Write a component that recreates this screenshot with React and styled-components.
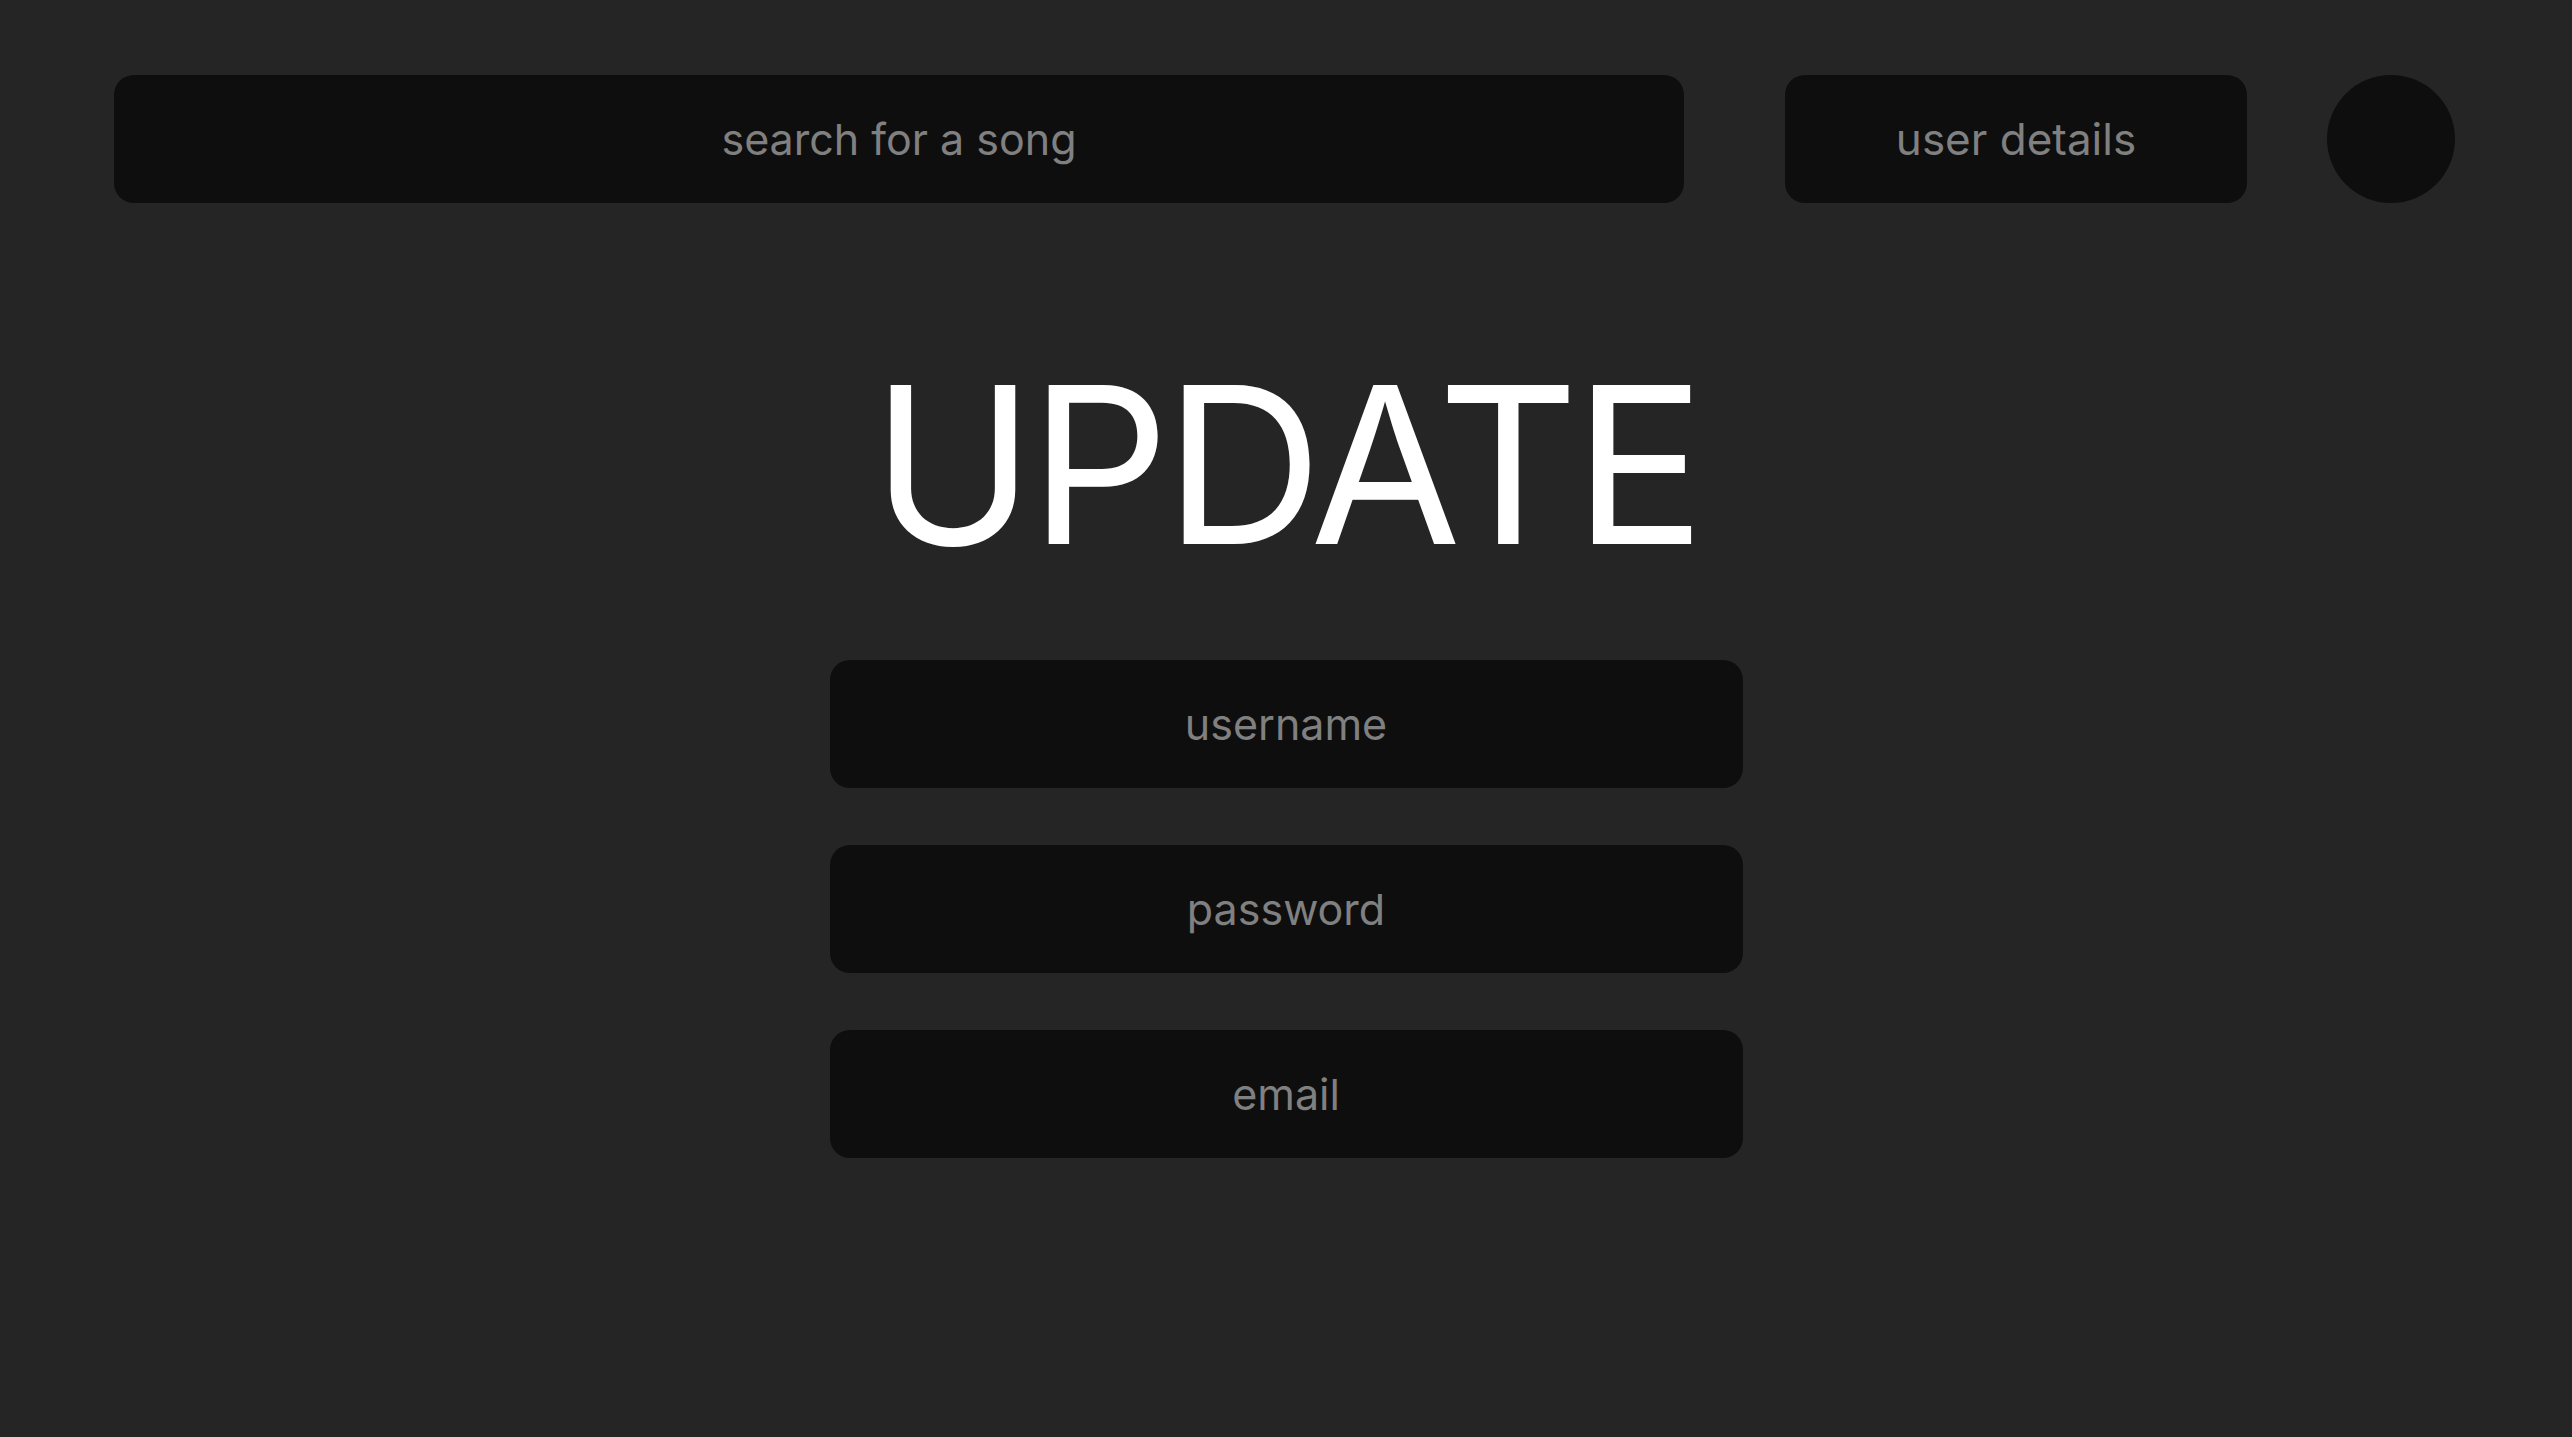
import styled, { createGlobalStyle } from "styled-components";

const GlobalStyle = createGlobalStyle`
  html, body {
    margin: 0;
    padding: 0;
    background: #252525;
  }
  body {
    font-family: Inter, "Noto Sans", sans-serif;
  }
  * {
    box-sizing: border-box;
  }
`;

const Page = styled.div`
  min-height: 100vh;
  background: #252525;
  display: flex;
  flex-direction: column;
  align-items: center;
`;

const Header = styled.header`
  width: 100%;
  display: flex;
  align-items: center;
  padding: 75px 117px 0 114px;
`;

const Field = styled.input`
  height: 128px;
  border: none;
  border-radius: 20px;
  background: #0e0e0e;
  color: #d0d0d0;
  font-family: Inter, "Noto Sans", sans-serif;
  font-size: 43px;
  text-align: center;
  outline: none;

  &::placeholder {
    color: #808080;
  }
`;

const SearchBar = styled(Field)`
  flex: 1;
  min-width: 0;
`;

const UserButton = styled.button`
  width: 462px;
  height: 128px;
  margin-left: 101px;
  border: none;
  border-radius: 20px;
  background: #0e0e0e;
  color: #808080;
  font-family: Inter, "Noto Sans", sans-serif;
  font-size: 44px;
  cursor: pointer;
`;

const Avatar = styled.div`
  width: 128px;
  height: 128px;
  margin-left: 80px;
  border-radius: 50%;
  background: #0e0e0e;
  flex-shrink: 0;
`;

const Title = styled.h1`
  margin: 155px 0 0;
  color: #ffffff;
  font-family: Inter, "Noto Sans", sans-serif;
  font-weight: 400;
  font-size: 219px;
  line-height: 214px;
  letter-spacing: -5px;
`;

const Form = styled.form`
  margin-top: 88px;
  display: flex;
  flex-direction: column;
  gap: 57px;
`;

const FormField = styled(Field)`
  width: 913px;
`;

export default function App() {
  return (
    <>
      <GlobalStyle />
      <Page>
        <Header>
          <SearchBar type="text" placeholder="search for a song" />
          <UserButton>user details</UserButton>
          <Avatar />
        </Header>
        <Title>UPDATE</Title>
        <Form>
          <FormField type="text" placeholder="username" />
          <FormField type="password" placeholder="password" />
          <FormField type="email" placeholder="email" />
        </Form>
      </Page>
    </>
  );
}
